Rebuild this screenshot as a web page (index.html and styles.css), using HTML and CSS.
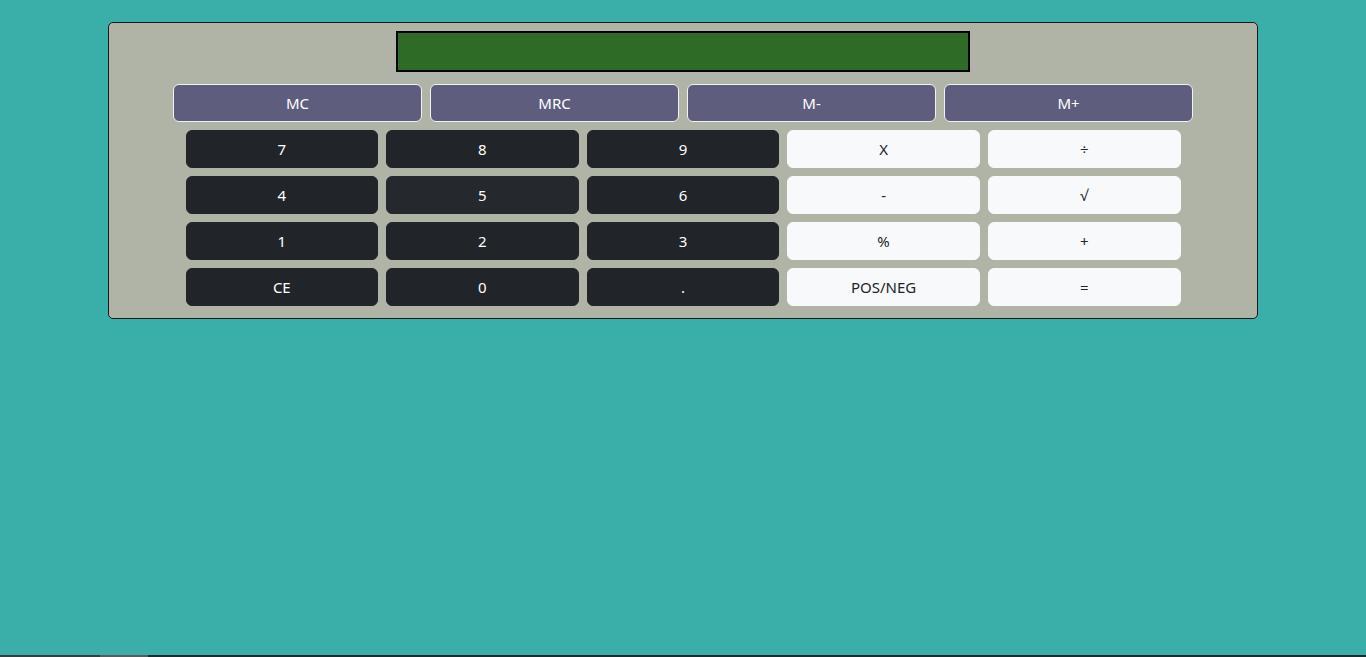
FILE: index.html
```html
<!DOCTYPE html>
<html lang="en">
<head>
<meta charset="utf-8">
<title>Calculator</title>
<link rel="stylesheet" href="styles.css">
</head>
<body>
<div class="calc">
  <div class="display"></div>
  <div class="memory">
    <button class="btn mem">MC</button>
    <button class="btn mem">MRC</button>
    <button class="btn mem">M-</button>
    <button class="btn mem">M+</button>
  </div>
  <div class="keys">
    <button class="btn dark">7</button>
    <button class="btn dark">8</button>
    <button class="btn dark">9</button>
    <button class="btn light">X</button>
    <button class="btn light">÷</button>
    <button class="btn dark">4</button>
    <button class="btn dark alt">5</button>
    <button class="btn dark">6</button>
    <button class="btn light">-</button>
    <button class="btn light">√</button>
    <button class="btn dark">1</button>
    <button class="btn dark">2</button>
    <button class="btn dark">3</button>
    <button class="btn light">%</button>
    <button class="btn light">+</button>
    <button class="btn dark">CE</button>
    <button class="btn dark">0</button>
    <button class="btn dark">.</button>
    <button class="btn light">POS/NEG</button>
    <button class="btn light">=</button>
  </div>
</div>
<div class="scrollbar"><span class="seg1"></span><span class="seg2"></span><span class="seg3"></span></div>
</body>
</html>
```
FILE: styles.css
```css
* { box-sizing: border-box; }
html, body { height: 100%; }
body {
  margin: 0;
  background: #3aaea9;
  font-family: "Noto Sans", "Open Sans", sans-serif;
  font-size: 16px;
  overflow: hidden;
}
.calc {
  width: 1150px;
  margin: 22px auto 0;
  background: #afb4a7;
  border: 1px solid #1a1a1a;
  border-radius: 5px;
  padding: 8px 0 12px;
  display: flex;
  flex-direction: column;
  align-items: center;
}
.display {
  width: 574px;
  height: 41px;
  background: #2e6b27;
  border: 2px solid #000;
}
.memory {
  margin-top: 12px;
  width: 1020px;
  display: grid;
  grid-template-columns: repeat(4, 249px);
  gap: 8px;
}
.keys {
  margin-top: 8px;
  width: 995px;
  display: grid;
  grid-template-columns: repeat(5, 1fr);
  column-gap: 8px;
  row-gap: 8px;
}
.btn {
  height: 38px;
  font-family: inherit;
  font-size: 15px;
  border-radius: 6px;
  border: 1px solid transparent;
  padding: 0;
  line-height: 1;
  cursor: pointer;
}
.mem {
  background: #5f5d7e;
  color: #fff;
  border-color: #f2f2f2;
}
.dark {
  background: #212529;
  color: #fff;
  border-color: #212529;
}
.dark.alt {
  background: #25282d;
  border-color: #25282d;
}
.light {
  background: #f8f9fa;
  color: #212529;
  border-color: #f8f9fa;
}
.scrollbar {
  position: fixed;
  left: 0;
  right: 0;
  bottom: 0;
  height: 2px;
  display: flex;
}
.seg1 { width: 100px; background: #3b3c37; }
.seg2 { width: 48px; background: #5a5a5a; }
.seg3 { flex: 1; background: #1f2b2a; }
```
